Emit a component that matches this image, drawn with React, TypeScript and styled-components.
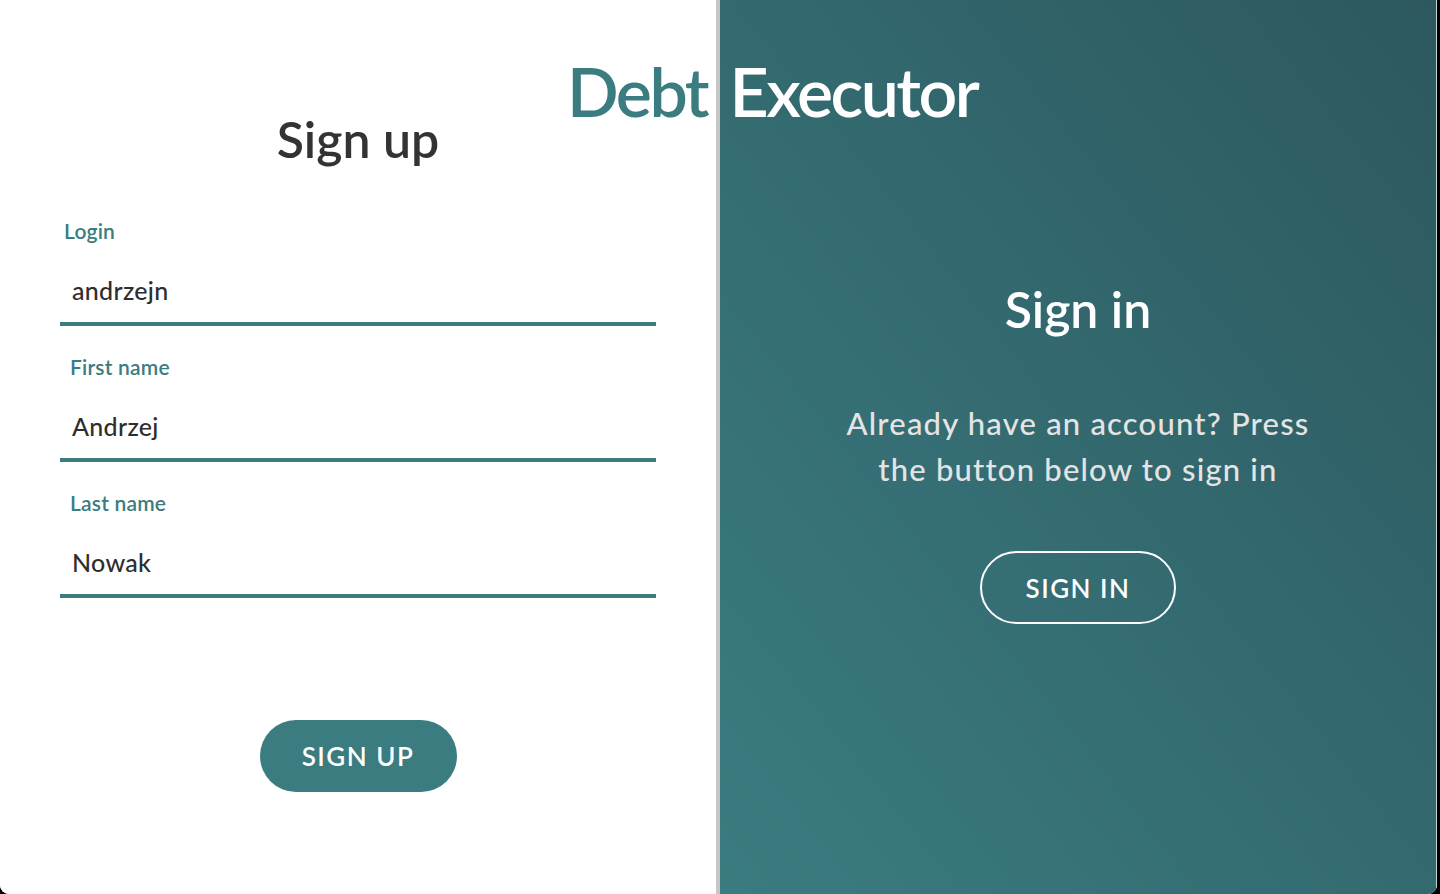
import React from "react";
import styled, { createGlobalStyle } from "styled-components";

const TEAL = "#3a7c80";
const FONT = `"Lato", "Noto Sans", "Liberation Sans", sans-serif`;

const Global = createGlobalStyle`
  html, body { margin: 0; padding: 0; background: #000; }
  body { font-family: ${FONT}; }
  * { box-sizing: border-box; }
`;

const Window = styled.div`
  position: relative;
  width: 1437px;
  height: 894px;
  display: flex;
  overflow: hidden;
  border-radius: 0 0 9px 9px;
  background: #fff;
`;

const LeftPanel = styled.section`
  width: 716px;
  flex: none;
  background: #fff;
  display: flex;
  flex-direction: column;
  align-items: center;
  padding-top: 109px;
`;

const Divider = styled.div`
  width: 4px;
  flex: none;
  background: #c6c6c6;
`;

const RightPanel = styled.section`
  flex: 1;
  background: linear-gradient(to top right, #3b7c81 0%, #336a70 50%, #2c585e 100%);
  border-right: 1px solid #c3d2d3;
  display: flex;
  flex-direction: column;
  align-items: center;
  padding-top: 279px;
`;

const Brand = styled.h1`
  position: absolute;
  top: 50px;
  left: 567px;
  margin: 0;
  font-family: ${FONT};
  font-weight: 600;
  font-size: 68px;
  line-height: 82px;
  letter-spacing: -2.5px;
  white-space: nowrap;
  word-spacing: 8px;
`;

const BrandPart = styled.span<{ $light?: boolean }>`
  color: ${(p) => (p.$light ? "#ffffff" : TEAL)};
`;

const Heading = styled.h2<{ $light?: boolean }>`
  margin: 0;
  font-family: ${FONT};
  font-weight: 600;
  font-size: 50px;
  line-height: 60px;
  color: ${(p) => (p.$light ? "#ffffff" : "#333333")};
`;

const Form = styled.form`
  width: 596px;
  margin-top: 49px;
  display: flex;
  flex-direction: column;
  gap: 28px;
`;

const Field = styled.label`
  display: flex;
  flex-direction: column;
  gap: 14px;
`;

const FieldLabel = styled.span<{ $shift: number }>`
  padding-left: ${(p) => p.$shift}px;
  font-size: 21px;
  line-height: 26px;
  font-weight: 600;
  letter-spacing: 0.2px;
  color: ${TEAL};
`;

const Input = styled.input`
  height: 68px;
  width: 100%;
  border: none;
  border-bottom: 4px solid ${TEAL};
  outline: none;
  background: transparent;
  padding: 0 12px;
  font-family: ${FONT};
  font-size: 25px;
  font-weight: 500;
  letter-spacing: 0.3px;
  color: #2e2e2e;
  caret-color: #333;
`;

const PrimaryButton = styled.button`
  margin-top: 122px;
  width: 197px;
  height: 72px;
  border: none;
  border-radius: 36px;
  background: ${TEAL};
  color: #fff;
  font-family: ${FONT};
  font-size: 26px;
  font-weight: 600;
  letter-spacing: 1.5px;
  cursor: pointer;
`;

const Text = styled.p`
  margin: 61px 0 0;
  width: 480px;
  text-align: center;
  font-size: 31px;
  line-height: 46px;
  font-weight: 500;
  letter-spacing: 1.2px;
  color: #e4e4e4;
`;

const GhostButton = styled.button`
  margin-top: 59px;
  width: 196px;
  height: 73px;
  border: 2px solid #fff;
  border-radius: 37px;
  background: transparent;
  color: #fff;
  font-family: ${FONT};
  font-size: 26px;
  font-weight: 600;
  letter-spacing: 1.5px;
  cursor: pointer;
`;

const fields = [
  { label: "Login", value: "andrzejn", shift: 4 },
  { label: "First name", value: "Andrzej", shift: 10 },
  { label: "Last name", value: "Nowak", shift: 10 },
];

export default function App() {
  return (
    <>
      <Global />
      <Window>
        <LeftPanel>
          <Heading>Sign up</Heading>
          <Form onSubmit={(e) => e.preventDefault()}>
            {fields.map((f, i) => (
              <Field key={f.label}>
                <FieldLabel $shift={f.shift}>{f.label}</FieldLabel>
                <Input defaultValue={f.value} autoFocus={i === fields.length - 1} />
              </Field>
            ))}
          </Form>
          <PrimaryButton type="button">SIGN UP</PrimaryButton>
        </LeftPanel>
        <Divider />
        <RightPanel>
          <Heading $light>Sign in</Heading>
          <Text>Already have an account? Press the button below to sign in</Text>
          <GhostButton type="button">SIGN IN</GhostButton>
        </RightPanel>
        <Brand>
          <BrandPart>Debt</BrandPart> <BrandPart $light>Executor</BrandPart>
        </Brand>
      </Window>
    </>
  );
}
